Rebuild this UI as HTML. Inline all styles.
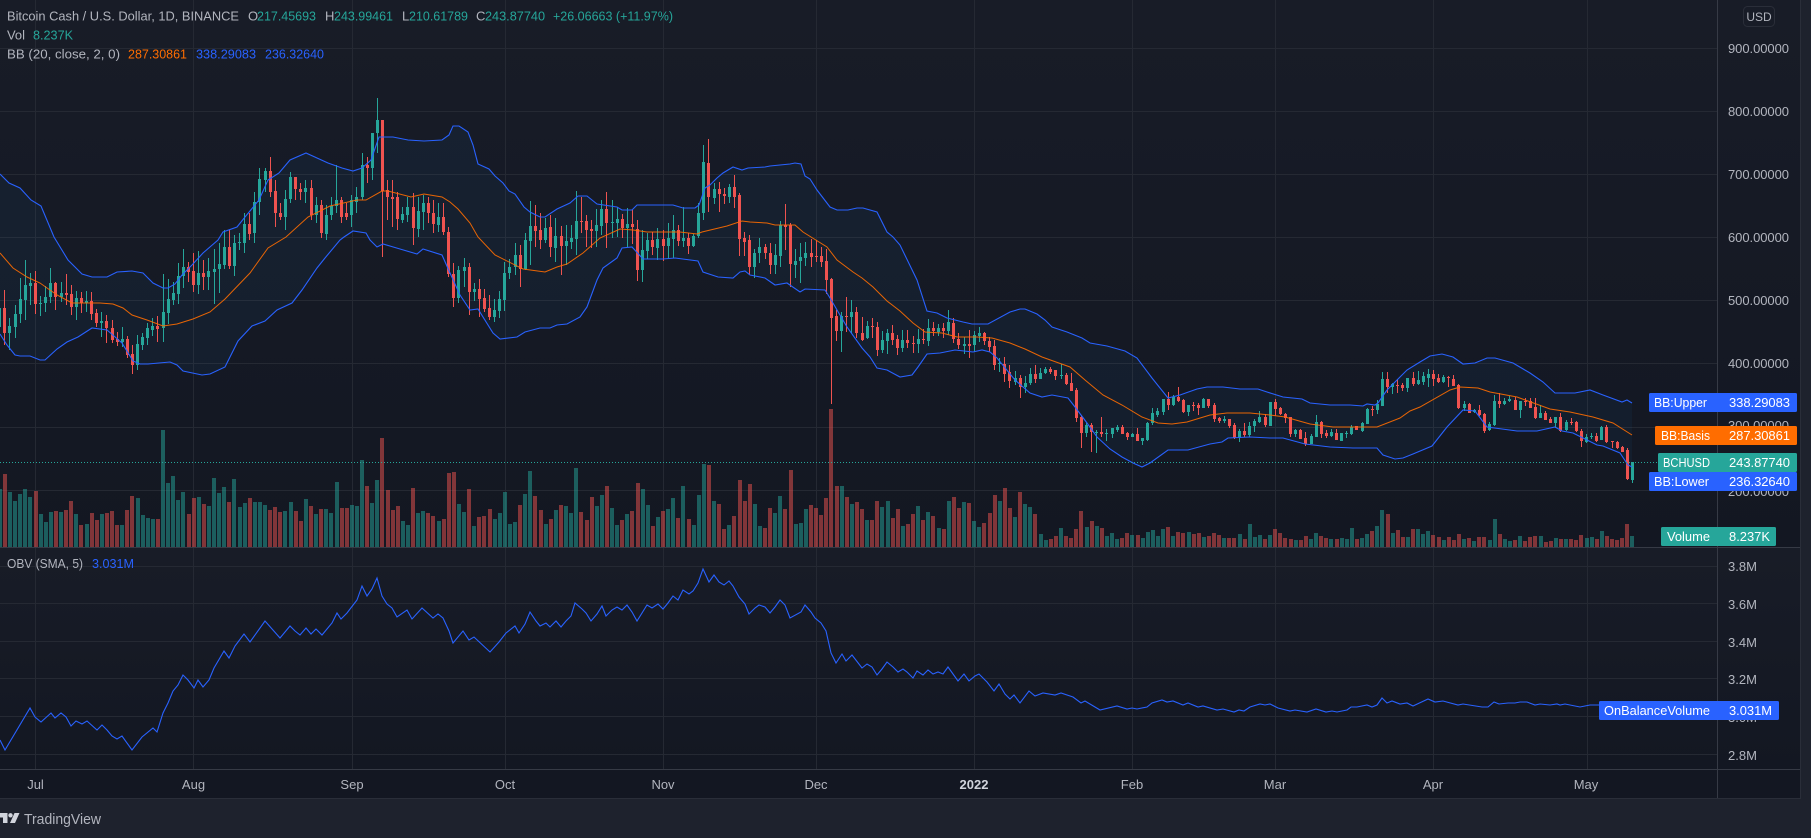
<!DOCTYPE html>
<html><head><meta charset="utf-8"><title>BCHUSD</title>
<style>
html,body{margin:0;padding:0;background:#1e222d;width:1811px;height:838px;overflow:hidden}
svg{display:block}
text{font-family:"Liberation Sans",sans-serif;font-size:13px}
.a{fill:#b2b5be}
.t{fill:#26a69a}
.o{fill:#ff6d00}
.b{fill:#2962ff}
.w{fill:#fff}
</style></head><body>
<svg xmlns="http://www.w3.org/2000/svg" width="1811" height="838" viewBox="0 0 1811 838">
<defs>
<linearGradient id="g1" x1="0" y1="0" x2="0" y2="1"><stop offset="0" stop-color="#181c27"/><stop offset="1" stop-color="#131722"/></linearGradient>
<clipPath id="cp"><rect x="0" y="0" width="1717" height="547"/></clipPath>
</defs>
<rect width="1811" height="838" fill="#1e222d"/>
<rect x="0" y="0" width="1800" height="547" fill="url(#g1)"/>
<rect x="0" y="548" width="1800" height="221" fill="url(#g1)"/>
<rect x="0" y="770" width="1800" height="28" fill="#131722"/>
<g fill="#252933" shape-rendering="crispEdges">
<rect x="0" y="48" width="1717" height="1"/><rect x="0" y="111" width="1717" height="1"/><rect x="0" y="174" width="1717" height="1"/><rect x="0" y="237" width="1717" height="1"/><rect x="0" y="300" width="1717" height="1"/><rect x="0" y="363" width="1717" height="1"/><rect x="0" y="427" width="1717" height="1"/><rect x="0" y="490" width="1717" height="1"/>
<rect x="0" y="566" width="1717" height="1"/><rect x="0" y="603" width="1717" height="1"/><rect x="0" y="641" width="1717" height="1"/><rect x="0" y="678" width="1717" height="1"/><rect x="0" y="716" width="1717" height="1"/><rect x="0" y="754" width="1717" height="1"/>
<rect x="35" y="0" width="1" height="769"/><rect x="193" y="0" width="1" height="769"/><rect x="352" y="0" width="1" height="769"/><rect x="505" y="0" width="1" height="769"/><rect x="663" y="0" width="1" height="769"/><rect x="816" y="0" width="1" height="769"/><rect x="974" y="0" width="1" height="769"/><rect x="1132" y="0" width="1" height="769"/><rect x="1275" y="0" width="1" height="769"/><rect x="1433" y="0" width="1" height="769"/><rect x="1587" y="0" width="1" height="769"/>
</g>
<g clip-path="url(#cp)">
<polygon id="band" fill="#2196f3" fill-opacity="0.05"/>
<path id="vg" fill="#26a69a" fill-opacity="0.5" shape-rendering="crispEdges"/>
<path id="vr" fill="#ef5350" fill-opacity="0.5" shape-rendering="crispEdges"/>
<path id="cg" fill="#26a69a" shape-rendering="crispEdges"/>
<path id="cr" fill="#ef5350" shape-rendering="crispEdges"/>
<polyline id="lb" fill="none" stroke="#ff6d00" stroke-width="1" stroke-opacity=".9"/>
<polyline id="lu" fill="none" stroke="#2962ff" stroke-width="1.1"/>
<polyline id="ll" fill="none" stroke="#2962ff" stroke-width="1.1"/>
<line x1="0" y1="462.5" x2="1717" y2="462.5" stroke="#26a69a" stroke-width="1" stroke-dasharray="1 2"/>
</g>
<polyline id="obv" fill="none" stroke="#2962ff" stroke-width="1.1"/>
<g fill="#363a45" shape-rendering="crispEdges">
<rect x="1717" y="0" width="1" height="798"/>
<rect x="0" y="547" width="1800" height="1"/>
<rect x="0" y="769" width="1800" height="1"/>
<rect x="0" y="798" width="1801" height="1" fill="#2a2e39"/>
<rect x="1800" y="0" width="1" height="799" fill="#2a2e39"/>
</g>

<text class="a" x="7" y="20.5" textLength="232" lengthAdjust="spacingAndGlyphs">Bitcoin Cash / U.S. Dollar, 1D, BINANCE</text>
<text class="a" x="248" y="20.5">O</text><text class="t" x="257" y="20.5" textLength="59" lengthAdjust="spacingAndGlyphs">217.45693</text>
<text class="a" x="325" y="20.5">H</text><text class="t" x="334" y="20.5" textLength="59" lengthAdjust="spacingAndGlyphs">243.99461</text>
<text class="a" x="402" y="20.5">L</text><text class="t" x="409" y="20.5" textLength="59" lengthAdjust="spacingAndGlyphs">210.61789</text>
<text class="a" x="476" y="20.5">C</text><text class="t" x="485" y="20.5" textLength="60" lengthAdjust="spacingAndGlyphs">243.87740</text>
<text class="t" x="553" y="20.5" textLength="120" lengthAdjust="spacingAndGlyphs">+26.06663 (+11.97%)</text>
<text class="a" x="7" y="39.5" textLength="18" lengthAdjust="spacingAndGlyphs">Vol</text><text class="t" x="33" y="39.5" textLength="40" lengthAdjust="spacingAndGlyphs">8.237K</text>
<text class="a" x="7" y="58.5" textLength="113" lengthAdjust="spacingAndGlyphs">BB (20, close, 2, 0)</text>
<text class="o" x="128" y="58.5" textLength="59" lengthAdjust="spacingAndGlyphs">287.30861</text>
<text class="b" x="196" y="58.5" textLength="60" lengthAdjust="spacingAndGlyphs">338.29083</text>
<text class="b" x="265" y="58.5" textLength="59" lengthAdjust="spacingAndGlyphs">236.32640</text>
<text class="a" x="7" y="568" textLength="76" lengthAdjust="spacingAndGlyphs">OBV (SMA, 5)</text>
<text class="b" x="92" y="568" textLength="42" lengthAdjust="spacingAndGlyphs">3.031M</text>

<g class="a">
<text x="1728" y="53" textLength="61">900.00000</text>
<text x="1728" y="116" textLength="61">800.00000</text>
<text x="1728" y="179" textLength="61">700.00000</text>
<text x="1728" y="242" textLength="61">600.00000</text>
<text x="1728" y="305" textLength="61">500.00000</text>
<text x="1728" y="368" textLength="61">400.00000</text>
<text x="1728" y="430" textLength="61">300.00000</text>
<text x="1728" y="496" textLength="61">200.00000</text>
<text x="1728" y="571">3.8M</text>
<text x="1728" y="609">3.6M</text>
<text x="1728" y="647">3.4M</text>
<text x="1728" y="684">3.2M</text>
<text x="1728" y="722">3.0M</text>
<text x="1728" y="760">2.8M</text>
</g>
<rect x="1743.5" y="6.5" width="31" height="20" rx="4" fill="none" stroke="#2a2e39"/>
<text class="a" x="1759" y="21" text-anchor="middle" style="font-size:12px">USD</text>

<rect x="1649" y="393" width="148" height="19" rx="1.5" fill="#2962ff"/>
<text class="w" x="1654" y="407" textLength="53" lengthAdjust="spacingAndGlyphs">BB:Upper</text><text class="w" x="1729" y="407" textLength="61">338.29083</text>
<rect x="1655" y="426" width="142" height="19" rx="1.5" fill="#ff6d00"/>
<text class="w" x="1661" y="440" textLength="49" lengthAdjust="spacingAndGlyphs">BB:Basis</text><text class="w" x="1729" y="440" textLength="61">287.30861</text>
<rect x="1658" y="453" width="139" height="19" rx="1.5" fill="#26a69a"/>
<text class="w" x="1663" y="467" textLength="47" lengthAdjust="spacingAndGlyphs">BCHUSD</text><text class="w" x="1729" y="467" textLength="61">243.87740</text>
<rect x="1649" y="472" width="148" height="19" rx="1.5" fill="#2962ff"/>
<text class="w" x="1654" y="486" textLength="55" lengthAdjust="spacingAndGlyphs">BB:Lower</text><text class="w" x="1729" y="486" textLength="61">236.32640</text>
<rect x="1661" y="527" width="115" height="19" rx="1.5" fill="#26a69a"/>
<text class="w" x="1667" y="541" textLength="43" lengthAdjust="spacingAndGlyphs">Volume</text><text class="w" x="1729" y="541" textLength="41" lengthAdjust="spacingAndGlyphs">8.237K</text>
<rect x="1599" y="701" width="180" height="19" rx="1.5" fill="#2962ff"/>
<text class="w" x="1604" y="715" textLength="106" lengthAdjust="spacingAndGlyphs">OnBalanceVolume</text><text class="w" x="1729" y="715" textLength="43" lengthAdjust="spacingAndGlyphs">3.031M</text>

<g class="a" text-anchor="middle">
<text x="35.5" y="789">Jul</text><text x="193.5" y="789">Aug</text><text x="352" y="789">Sep</text><text x="505" y="789">Oct</text><text x="663" y="789">Nov</text><text x="816" y="789">Dec</text><text x="974" y="789" font-weight="bold" style="fill:#d1d4dc">2022</text><text x="1132" y="789">Feb</text><text x="1275" y="789">Mar</text><text x="1433" y="789">Apr</text><text x="1586" y="789">May</text>
</g>

<g fill="#d1d4dc">
<path d="M-3 813H7.5V823H3V817.5H-3z"/>
<circle cx="10.5" cy="815.3" r="2.2"/>
<path d="M19.5 813L15 823H10L14.5 813z"/>
</g>
<text x="24" y="824" style="font-size:15px;fill:#b2b5be" textLength="77" lengthAdjust="spacingAndGlyphs">TradingView</text>
</svg>
<script>
var U="0,174 9,183 20,188 31,200 41,206 54,237 68,260 82,274 92,277 107,277 117,272 132,271 143,273 153,283 163,288 168,288 175,284 182,275 192,265 203,253 218,240 223,232 237,227 245,217 259,200 268,180 279,173 290,160 306,153 328,163 342,168 353,171 362,168 371,160 379,137 393,137 408,140 424,141 442,140 449,135 453,126 459,126 468,132 473,145 478,164 489,169 495,176 503,183 509,191 515,194 524,207 530,212 540,217 545,217 557,209 570,203 578,196 587,196 597,204 617,207 622,210 632,210 637,205 673,205 683,208 695,208 699,205 705,188 710,185 717,178 723,173 733,167 742,170 748,168 765,167 770,166 790,164 795,163 801,164 805,176 810,179 817,190 830,207 837,210 848,210 857,208 863,208 877,212 887,232 893,237 900,245 917,280 927,311 937,313 947,318 963,322 972,324 988,324 1010,312 1020,309 1025,309 1037,314 1045,320 1052,327 1067,332 1082,338 1090,343 1107,346 1125,351 1137,358 1152,378 1168,398 1180,395 1197,389 1207,387 1223,387 1240,389 1258,389 1267,392 1283,397 1302,399 1310,403 1330,405 1350,405 1363,406 1367,404 1375,405 1378,403 1387,390 1397,380 1407,370 1420,362 1430,356 1442,354 1453,357 1463,364 1475,363 1487,358 1495,358 1513,363 1530,373 1543,382 1555,393 1575,393 1590,390 1603,395 1622,402 1627,400 1632,403";
var L="0,334 7,345 15,355 20,356 30,356 40,360 45,360 57,349 67,342 78,337 92,328 107,330 122,343 133,361 140,364 148,364 170,362 177,365 183,371 202,375 210,374 225,367 238,341 252,326 265,321 277,310 292,303 302,290 317,268 325,258 340,240 344,237 353,231 366,233 370,240 377,247 383,244 400,249 417,254 423,249 442,255 450,273 460,295 470,310 478,309 493,333 500,339 517,337 525,332 540,328 550,328 557,325 567,324 580,317 587,307 597,280 603,268 617,258 622,248 632,247 643,259 663,259 675,258 698,261 703,272 718,277 733,278 740,272 745,271 750,275 765,278 775,285 787,283 800,292 805,289 825,290 830,298 847,327 862,348 870,357 877,368 887,370 900,377 912,375 918,367 927,354 940,353 955,350 973,352 982,350 990,352 997,358 1015,380 1030,393 1042,397 1052,395 1068,398 1075,407 1087,423 1097,437 1110,449 1122,457 1133,463 1142,467 1150,463 1168,450 1188,450 1210,444 1222,442 1228,438 1250,437 1270,438 1283,438 1305,444 1330,447 1353,448 1377,448 1383,455 1395,459 1403,458 1413,454 1432,446 1447,427 1463,410 1475,411 1487,427 1517,431 1537,431 1555,427 1562,431 1573,433 1587,440 1597,445 1603,446 1620,453 1628,465 1632,467";
var B="0,253 13,268 27,277 40,283 57,295 72,303 87,303 100,303 113,304 123,308 132,315 147,320 163,326 177,324 193,319 210,312 225,299 250,273 268,248 286,237 308,217 330,206 357,200 366,200 382,191 388,191 411,197 424,194 442,197 450,202 458,209 470,223 478,237 495,255 523,269 545,272 557,267 567,264 583,253 600,238 620,229 633,230 647,232 680,232 697,234 702,232 727,226 742,221 750,222 767,223 775,225 795,225 803,232 827,247 837,260 853,272 862,278 873,287 887,301 900,311 913,323 925,332 942,333 957,337 977,337 992,338 1010,343 1025,349 1042,357 1070,367 1085,380 1103,395 1122,405 1142,417 1158,423 1172,424 1187,422 1210,415 1227,413 1250,413 1270,415 1285,417 1310,424 1333,427 1377,427 1400,418 1410,411 1420,407 1450,390 1460,387 1478,388 1490,392 1517,397 1550,409 1570,412 1593,417 1613,423 1632,435";
var O="0,740 5,750 30,708 35,717 41,722 51,713 55,718 61,713 66,717 71,726 76,721 82,724 87,721 97,730 102,725 107,730 112,736 117,739 122,736 132,750 142,737 153,728 157,732 163,713 168,703 173,691 178,685 183,675 188,680 194,688 198,680 203,687 209,680 214,668 224,651 229,658 235,646 244,634 250,642 265,621 280,638 290,626 295,631 300,635 306,628 311,634 316,629 322,635 332,623 337,613 341,619 347,613 357,600 362,586 367,596 372,589 377,578 382,596 387,604 392,608 397,617 407,610 412,619 422,608 433,618 438,614 443,618 449,631 453,643 463,631 469,640 474,637 490,652 499,642 506,633 515,626 519,633 525,624 530,612 536,621 540,626 546,623 550,627 556,621 561,627 566,621 571,616 575,603 582,609 586,613 591,621 597,614 602,606 606,616 612,610 617,607 622,610 627,605 632,612 637,621 647,605 652,608 658,604 663,609 668,603 673,596 678,600 683,590 689,594 693,591 698,583 703,569 709,582 714,575 719,582 724,585 729,581 733,586 739,597 745,604 749,614 755,608 759,605 765,607 770,613 775,607 780,600 785,605 790,618 801,612 805,605 811,612 815,618 821,623 826,631 831,653 836,663 842,654 846,661 852,655 862,668 867,664 872,667 877,675 882,669 887,662 893,667 898,672 903,669 907,672 913,678 917,671 923,675 928,670 933,674 938,672 943,674 948,667 958,681 964,674 969,681 975,676 979,674 987,682 994,691 999,684 1005,694 1010,699 1014,695 1020,703 1029,691 1035,696 1043,693 1055,695 1061,693 1073,697 1081,703 1085,701 1100,710 1117,706 1127,709 1132,708 1137,709 1147,707 1152,703 1162,700 1167,702 1173,701 1183,705 1188,703 1198,707 1203,706 1217,710 1223,709 1234,712 1239,710 1244,711 1250,707 1260,704 1265,705 1270,704 1278,708 1290,711 1295,710 1307,712 1316,709 1326,712 1332,711 1337,712 1347,710 1351,707 1357,707 1367,705 1372,707 1377,705 1382,698 1387,703 1392,701 1400,704 1407,703 1413,706 1428,699 1435,702 1443,701 1458,705 1463,704 1482,707 1488,707 1494,702 1499,704 1508,703 1515,703 1520,702 1527,702 1535,705 1540,704 1550,705 1557,704 1560,705 1565,704 1580,707 1590,705 1632,705";
var V=[489,474,492,501,494,489,497,
491,514,522,512,511,512,510,501,514,525,
524,513,520,514,513,511,525,525,510,496,
498,515,518,519,519,430,483,476,500,492,
514,498,497,504,506,478,493,487,502,479,
507,503,498,502,502,505,510,507,512,511,
502,511,521,499,506,514,509,509,513,482,
508,508,505,506,460,486,503,480,438,490,
510,506,521,525,488,513,511,513,516,521,
519,473,472,504,512,489,526,517,516,509,
519,513,492,524,522,505,494,471,496,510,
524,519,510,505,506,513,468,512,520,497,
506,495,486,508,525,520,514,511,483,489,
505,526,517,511,509,498,518,486,519,525,
495,464,465,501,504,529,525,516,480,501,
484,504,526,528,508,513,496,509,470,524,
523,509,505,508,515,498,409,486,486,497,
504,502,509,520,520,501,507,501,518,509,
526,524,514,506,520,512,516,528,529,501,
497,508,502,503,521,527,523,513,495,501,
488,508,517,492,504,507,514,534,540,539,
536,528,536,538,529,511,527,521,526,528,
536,533,539,538,533,535,535,538,532,530,
536,529,527,536,532,533,532,534,533,537,
536,533,535,538,538,538,534,539,524,537,
535,539,535,529,533,538,539,540,540,536,
539,533,536,538,539,539,538,539,528,539,
538,534,531,526,510,514,533,530,537,537,
529,529,534,531,535,537,540,537,540,534,
539,538,541,537,537,540,519,534,539,541,
540,536,541,537,536,536,542,541,538,539,
539,539,540,535,538,537,539,531,536,539,
540,538,524,536];
var S=[
[-7,240,"g203,262,140,300 r203,280,150,315 g258,280,235,330 g222,260,195,295 g178,222,115,250 g135,180,60,240 g128,138,100,195 r128,192,92,222 g190,191,168,228 g172,190,138,215 g128,172,85,190 r128,172,125,210 g160,172,125,185 r160,165,102,195 r162,200,135,225 g175,200,152,240 r175,190,155,218 g183,190,152,215 r183,222,155,240 r220,250,208,262 g243,250,215,290 r243,265,225,308 r265,300,240,308 r298,305,275,318 g298,305,262,320 r298,345,288,355 r342,375,315,402 g312,375,285,390 g292,315,280,330 g263,293,250,315 g258,270,235,288 r258,268,228,305 g215,265,102,305 g178,218,118,252 g160,180,125,195 g108,162,68,192 g82,108,28,145 r82,95,65,125 r93,135,40,155 g98,135,33,162 r98,110,60,150 g93,110,55,150 g87,95,28,192 g72,87,10,160 g22,75,-30,88 r22,78,-30,88 g8,78,-15,108"],
[40,0,"g725,728,700,750 g672,728,640,760 r672,702,640,720 g607,700,575,730 g537,605,505,645 g513,540,505,575 r513,575,470,590 r573,640,540,680 r640,652,610,660 g597,652,570,690 g532,598,515,610 r532,568,530,600 r567,575,550,600 g563,575,540,610 r563,645,540,660 g615,645,590,670 r615,700,600,715 g645,702,615,720 g618,645,590,660 g600,618,495,640 r600,650,590,670 r640,650,610,660 g600,645,585,680 g590,605,560,640 g495,590,460,600 r495,505,470,550 g400,505,400,540 g360,400,295,460 r360,572,360,770 r570,590,540,660 r590,597,540,680 r592,658,575,690 g642,660,620,670 g620,645,590,665 r620,685,580,735 g633,688,590,712 g608,635,585,690 r610,640,590,670 r638,672,600,700 g650,675,610,695 r650,695,610,705"],
[81,90,"r425,552,410,560 r552,623,520,650 g540,623,528,638 g530,542,505,590 r530,605,520,675 g597,607,580,632 r597,627,568,680 r625,657,597,665 r655,682,615,690 g660,680,628,695 g628,662,603,683 g548,630,515,662 g530,548,508,567 g495,530,460,555 r495,538,465,590 g450,538,430,540 g408,452,333,525 r408,423,345,470 r420,450,370,478 g415,450,385,460 r411,472,375,500 g438,473,385,515 r438,467,408,556 g453,467,405,525 g445,456,405,478 g393,446,303,495 r393,396,320,430 r393,420,375,470 r418,423,390,475 g405,423,358,472 g357,407,330,435 r357,398,306,475 g396,398,330,445 g387,398,350,440 r387,415,372,445 g402,415,353,470 r403,412,360,462 r418,540,390,572 g480,540,420,575 g450,482,428,508 r450,472,425,495 g447,473,415,510 r447,468,420,512 g444,468,400,506 g420,447,375,505 r420,453,405,468 g444,453,352,470 r444,468,430,492 g437,469,432,472 g370,438,340,445 g215,370,165,390 r220,321,148,365 g296,323,278,342 r296,312,277,365 r312,318,293,342 g291,320,283,340 r291,321,255,353 r315,447,310,497 r445,456,425,498 r450,530,435,555 g489,530,478,563 g471,489,444,520 r471,489,462,508 r489,525,460,553 g495,525,462,552 g405,497,393,530 r405,411,343,480 r405,522,400,592 g513,525,477,565 g501,513,460,578 g489,503,457,528 r489,500,448,530 r498,500,450,515 r498,516,470,530 r513,570,478,612 r567,684,565,942 r678,723,660,752 g678,723,665,785 r678,681,620,725 g666,681,630,730 r666,730,652,745 r729,750,680,752 g708,745,692,748 r708,710,685,745 r711,780,695,797 g750,780,722,790 g729,752,717,792 r729,750,705,765 r747,773,735,795"],
[170,280,"g180,205,150,215 r180,188,150,205 r188,193,168,218 g177,193,148,220 r177,180,148,192 g145,183,118,197 r145,153,125,168 g145,155,133,167 r145,152,128,175 g127,152,90,165 r128,178,115,190 r178,195,160,207 g193,197,170,222 r193,197,150,235 g166,195,152,215 g160,168,142,185 r160,182,155,195 r183,200,170,215 r198,255,180,270 g248,252,235,275 r253,282,232,305 r276,303,255,323 g293,306,273,316 r293,320,285,355 g309,320,288,338 g281,310,265,315 r282,297,255,310 g279,297,265,298 g266,279,262,283 r266,275,262,283 r271,288,270,300 g285,287,252,298 r285,313,280,315 r310,332,280,332 r330,414,325,425 r412,458,405,503 g435,458,430,470 r435,456,430,515 g455,458,450,518 r456,462,410,470 g459,461,448,483 g445,462,445,473 g440,450,435,455 r440,461,435,463 r458,471,455,480 g461,470,458,472 r461,482,445,483 g474,482,474,495 g428,480,426,483 g399,430,385,435 g392,405,385,412 g357,397,357,405 r358,375,335,390 g350,375,345,378 r350,362,322,365 r360,397,358,400 g375,395,375,407 r375,378,365,392 r375,384,370,405 g357,384,355,384 r358,378,358,383 r375,418,370,425 r414,424,410,428 g418,424,408,430 r418,438,418,443 r435,474,430,478 g453,474,448,485 r453,465,430,470"],
[238,340,"g257,284,245,290 g242,258,238,275 g231,246,213,248 r231,255,222,262 g186,257,186,258 r186,207,178,228 r203,222,200,225 r222,233,220,250 r232,283,230,290 g269,283,267,290 r269,297,267,298 r294,312,276,318 g288,312,282,313 g246,291,225,292 r246,282,243,293 r280,287,270,293 g276,288,268,290 r280,300,267,301 g280,302,278,302 g280,283,273,293 g262,283,255,285 r259,270,258,270 g249,272,247,275 g207,252,205,252 r207,210,198,228 g192,210,180,222 g117,197,97,198 r117,142,97,160 g132,142,128,163 r135,136,118,160 r134,145,128,153 g114,143,114,155 r114,133,97,137 g120,132,93,135 g108,127,97,135 g102,115,88,140 r102,117,90,137 r114,125,103,128 g111,127,106,130 r111,115,108,140 r117,138,105,138 r135,204,132,208 g192,204,183,212 r192,218,188,220 g210,216,207,218 r210,225,195,228 r222,274,218,278 g253,271,247,273 g183,254,165,258 r183,192,160,205 g182,192,174,195 g176,184,168,187 r180,209,170,210 g183,210,183,234 r183,186,175,198 r183,204,173,205 r202,234,175,237 g219,234,194,235 r219,240,213,241 r236,249,230,250 g232,250,232,265 r232,272,220,275 g246,270,240,272 r246,249,235,254 r246,274,242,275 r272,302,267,320 g291,305,282,310 g289,291,280,298 r288,303,280,305 g260,301,258,301 r260,307,255,310 r304,307,304,323 r306,324,303,326 r320,336,318,337 r330,417,325,420 g366,420,366,428"]
];
var cg="",cr="",vg="",vr="";
function X(i){return 35.5+5.102*i}
function rect(x,y,w,h){return "M"+x+" "+y+"h"+w+"v"+h+"h"+(-w)+"z"}
S.forEach(function(s){
 var st=s[0],off=s[1];
 s[2].split(" ").forEach(function(t,k){
  var c=t[0],a=t.slice(1).split(",").map(Number),i=st+k;
  var y=function(z){return Math.round(off+z/3)};
  var x=Math.round(X(i)-1.5);
  var bt=y(a[0]),bb=Math.max(y(a[1]),bt+1),ht=Math.min(y(a[2]),bt),hb=Math.max(y(a[3]),bb);
  var d=rect(x,bt,3,bb-bt)+rect(x+1,ht,1,hb-ht);
  if(c=="g")cg+=d;else cr+=d;
  var v=V[i+7];
  if(v!==undefined){
   var vd=rect(Math.round(X(i)-2),v,4,547-v);
   if(c=="g")vg+=vd;else vr+=vd;
  }
 });
});
function $(id){return document.getElementById(id)}
$("cg").setAttribute("d",cg);$("cr").setAttribute("d",cr);$("vg").setAttribute("d",vg);$("vr").setAttribute("d",vr);
$("lu").setAttribute("points",U);$("ll").setAttribute("points",L);$("lb").setAttribute("points",B);$("obv").setAttribute("points",O);
$("band").setAttribute("points",U+" "+L.split(" ").reverse().join(" "));
</script>
</body></html>
